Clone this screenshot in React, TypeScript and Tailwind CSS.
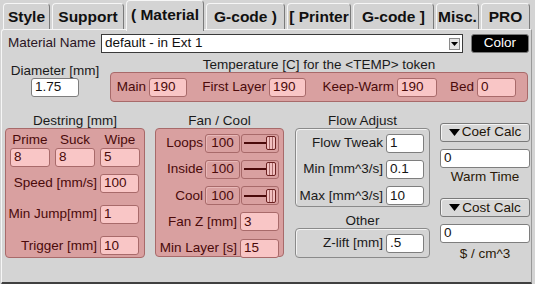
import React from 'react';

const tabs = [
  { label: 'Style', w: 'w-[47px]' },
  { label: 'Support', w: 'w-[72px]' },
  { label: '( Material', w: 'w-[78px]', active: true },
  { label: 'G-code )', w: 'w-[79px]' },
  { label: '[ Printer', w: 'w-[64px]' },
  { label: 'G-code ]', w: 'w-[81px]' },
  { label: 'Misc.', w: 'w-[43px]' },
  { label: 'PRO', w: 'w-[49px]' },
];

const whiteIn =
  'h-[19px] border border-[#7e7e7e] rounded-[3px] bg-white pl-[3px] text-[#141414] outline-none';
const pinkIn =
  'h-[19px] border border-[#a86a6a] rounded-[3px] bg-[#f9c6c6] pl-[3px] text-[#4a0a0a] outline-none';

const Field = ({ value, w, pink }: { value: string; w: string; pink?: boolean }) => (
  <input readOnly value={value} className={`${pink ? pinkIn : whiteIn} ${w}`} />
);

const Slider = () => (
  <div className="w-[38px] h-[19px] border border-[#a86a6a] rounded-[3px] bg-[#d9a0a0] flex items-center pl-[2px] pr-[2px]">
    <div className="flex-1 h-[2px] bg-[#4a0a0a]" />
    <div className="w-[10px] h-[14px] border border-[#6a2020] rounded-[2px] bg-[#f2c0c0] flex justify-center">
      <div className="w-[4px] h-full border-x border-[#a86a6a]" />
    </div>
  </div>
);

const Tri = () => (
  <svg width="11" height="7" viewBox="0 0 11 7" className="mr-[2px]">
    <path d="M0 0 L11 0 L5.5 7 Z" fill="#000" />
  </svg>
);

const CalcButton = ({ label }: { label: string }) => (
  <div className="h-[19px] w-[90px] border border-[#7a7a7a] rounded-[3px] bg-[#d8d8d8] flex items-center justify-center text-[#1e1408] shadow-[inset_1px_1px_0_#f4f4f4]">
    <Tri />
    {label}
  </div>
);

export default function App() {
  return (
    <div className="w-[535px] h-[284px] bg-[#d4d4d4] flex flex-col overflow-hidden font-['Liberation_Sans',Arial,sans-serif] text-[13.5px] text-[#1a1a1a]">
      {/* Tabs */}
      <div className="h-[29px] flex items-end pl-[3px] gap-[2px] relative z-10">
        {tabs.map((t) =>
          t.active ? (
            <div
              key={t.label}
              className={`${t.w} h-[31px] -mb-[2px] bg-[#d4d4d4] border border-b-0 border-[#f6f6f6] border-r-[#7a7a7a] rounded-t-[4px] flex items-center justify-center font-bold text-[15.5px] text-[#101010] pb-[2px] whitespace-nowrap`}
            >
              {t.label}
            </div>
          ) : (
            <div
              key={t.label}
              className={`${t.w} h-[26px] bg-[#d2d2d2] border border-b-0 border-[#f6f6f6] border-r-[#7a7a7a] rounded-t-[4px] flex items-center justify-center font-bold text-[15.5px] text-[#101010] whitespace-nowrap`}
            >
              {t.label}
            </div>
          )
        )}
      </div>

      {/* Panel */}
      <div className="flex-1 ml-[1px] mr-[3px] border-t border-l border-[#f6f6f6] border-r border-r-[#9a9a9a] border-b-2 border-b-[#404040] rounded-tl-[3px] flex flex-col">
        {/* Material Name row */}
        <div className="flex items-center mt-[4px] h-[19px]">
          <span className="w-[99px] pl-[6px] text-[#2a1424]">Material Name</span>
          <div className="w-[362px] h-[19px] border border-[#3a3a3a] bg-white flex items-center justify-between pl-[3px] pr-[2px]">
            <span className="text-[#101010]">default - in Ext 1</span>
            <div className="w-[11px] h-[12px] border border-[#8a8a8a] bg-[#e4e4e4] flex items-center justify-center">
              <svg width="7" height="4" viewBox="0 0 7 4">
                <path d="M0 0 L7 0 L3.5 4 Z" fill="#000" />
              </svg>
            </div>
          </div>
          <div className="ml-[8px] w-[58px] h-[19px] rounded-[3px] border border-[#7a7a7a] bg-black text-white flex items-center justify-center">
            Color
          </div>
        </div>

        {/* Diameter + Temperature */}
        <div className="flex mt-[5px]">
          <div className="w-[106px] flex flex-col items-center pt-[5px]">
            <span className="leading-[15px]">Diameter [mm]</span>
            <Field value="1.75" w="w-[48px]" />
          </div>
          <div className="ml-[2px] w-[418px] flex flex-col items-center">
            <span className="leading-[14px]">Temperature [C] for the &lt;TEMP&gt; token</span>
            <div className="w-full h-[30px] border border-[#a86a6a] rounded-[4px] bg-[#d9a0a0] flex items-center text-[#4a0a0a]">
              <span className="w-[38px] text-right pr-[3px]">Main</span>
              <Field pink value="190" w="w-[38px]" />
              <span className="w-[82px] text-right pr-[3px]">First Layer</span>
              <Field pink value="190" w="w-[37px]" />
              <span className="w-[91px] text-right pr-[3px]">Keep-Warm</span>
              <Field pink value="190" w="w-[40px]" />
              <span className="w-[40px] text-right pr-[3px]">Bed</span>
              <Field pink value="0" w="w-[39px]" />
            </div>
          </div>
        </div>

        {/* Lower section */}
        <div className="flex">
          {/* Destring */}
          <div className="ml-[3px] w-[140px] flex flex-col items-center pt-[11px]">
            <span className="leading-[15px]">Destring [mm]</span>
            <div className="w-full h-[130px] border border-[#a86a6a] rounded-[4px] bg-[#d9a0a0] text-[#4a0a0a] flex flex-col pt-[3px]">
              <div className="flex pl-[4px] gap-[5px]">
                {[
                  ['Prime', '8'],
                  ['Suck', '8'],
                  ['Wipe', '5'],
                ].map(([l, v]) => (
                  <div key={l} className="w-[40px] flex flex-col items-center">
                    <span className="leading-[16px]">{l}</span>
                    <Field pink value={v} w="w-[40px]" />
                  </div>
                ))}
              </div>
              {[
                ['Speed [mm/s]', '100', 'mt-[6px]'],
                ['Min Jump[mm]', '1', 'mt-[11px]'],
                ['Trigger [mm]', '10', 'mt-[11px]'],
              ].map(([l, v, m]) => (
                <div key={l} className={`flex items-center ${m}`}>
                  <span className="w-[94px] text-right pr-[3px] whitespace-nowrap">{l}</span>
                  <Field pink value={v} w="w-[39px]" />
                </div>
              ))}
            </div>
          </div>

          {/* Fan / Cool */}
          <div className="ml-[10px] w-[129px] flex flex-col items-center pt-[11px]">
            <span className="leading-[15px]">Fan / Cool</span>
            <div className="w-full h-[129px] border border-[#a86a6a] rounded-[4px] bg-[#d9a0a0] text-[#4a0a0a] flex flex-col pt-[4px] gap-[6px]">
              {['Loops', 'Inside', 'Cool'].map((l) => (
                <div key={l} className="flex items-center">
                  <span className="w-[49px] text-right pr-[2px]">{l}</span>
                  <div className="w-[35px] h-[19px] border border-[#a86a6a] rounded-[3px] bg-[#d9a0a0] flex items-center justify-center shadow-[inset_1px_1px_0_#e8b8b8]">
                    100
                  </div>
                  <div className="ml-[1px]">
                    <Slider />
                  </div>
                </div>
              ))}
              {[
                ['Fan Z [mm]', '3'],
                ['Min Layer [s]', '15'],
              ].map(([l, v]) => (
                <div key={l} className="flex items-center">
                  <span className="w-[84px] text-right pr-[3px] whitespace-nowrap">{l}</span>
                  <Field pink value={v} w="w-[39px]" />
                </div>
              ))}
            </div>
          </div>

          {/* Flow Adjust / Other */}
          <div className="ml-[11px] w-[135px] flex flex-col items-center pt-[11px]">
            <span className="leading-[15px]">Flow Adjust</span>
            <div className="w-full h-[79px] border border-[#8a8a8a] rounded-[4px] shadow-[inset_1px_1px_0_#f2f2f2] flex flex-col pt-[4px] gap-[6px]">
              {[
                ['Flow Tweak', '1'],
                ['Min [mm^3/s]', '0.1'],
                ['Max [mm^3/s]', '10'],
              ].map(([l, v]) => (
                <div key={l} className="flex items-center">
                  <span className="w-[90px] text-right pr-[3px] whitespace-nowrap">{l}</span>
                  <Field value={v} w="w-[38px]" />
                </div>
              ))}
            </div>
            <span className="leading-[15px] mt-[6px]">Other</span>
            <div className="w-full h-[30px] border border-[#8a8a8a] rounded-[4px] shadow-[inset_1px_1px_0_#f2f2f2] flex items-center">
              <span className="w-[90px] text-right pr-[3px]">Z-lift [mm]</span>
              <Field value=".5" w="w-[38px]" />
            </div>
          </div>

          {/* Calc column */}
          <div className="ml-[10px] w-[90px] flex flex-col items-center pt-[21px]">
            <CalcButton label="Coef Calc" />
            <div className="mt-[6px]">
              <Field value="0" w="w-[90px]" />
            </div>
            <span className="leading-[15px] mt-[1px] text-[#2a1a08]">Warm Time</span>
            <div className="mt-[14px]">
              <CalcButton label="Cost Calc" />
            </div>
            <div className="mt-[6px]">
              <Field value="0" w="w-[90px]" />
            </div>
            <span className="leading-[15px] mt-[2px] text-[#2a1a08]">$ / cm^3</span>
          </div>
        </div>
      </div>
    </div>
  );
}
